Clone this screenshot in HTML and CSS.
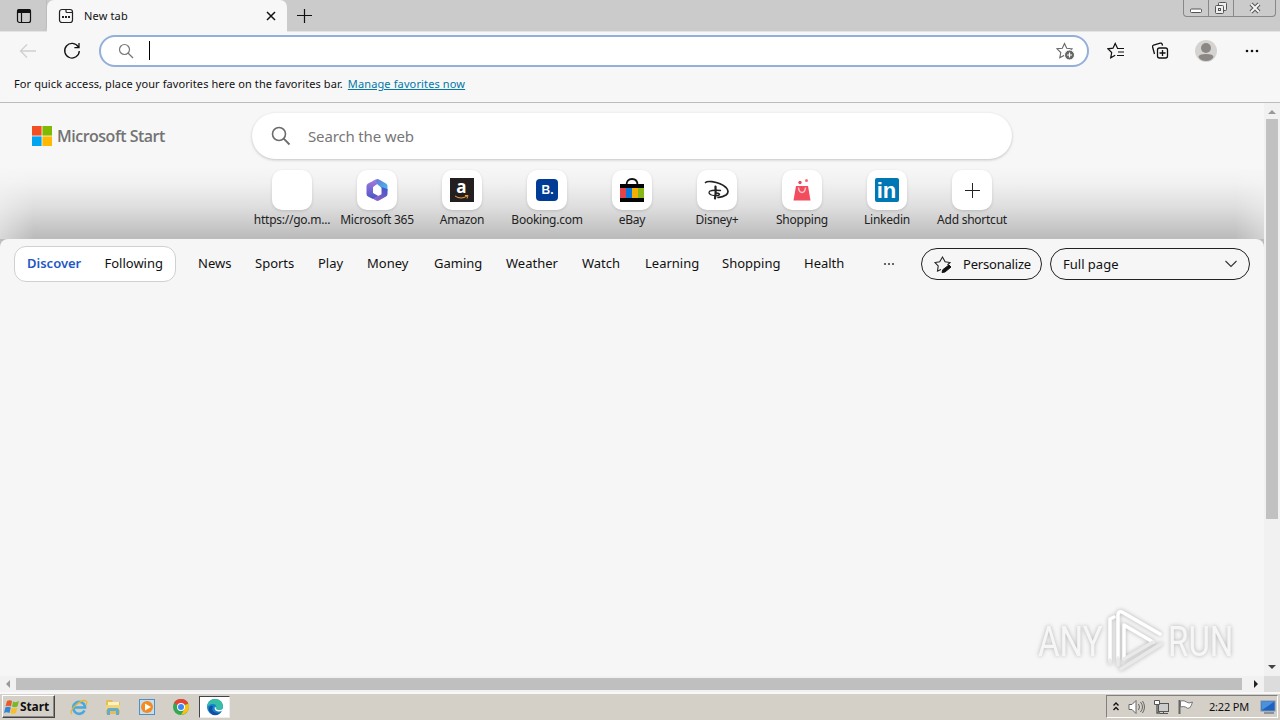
FILE: index.html
```html
<!DOCTYPE html>
<html lang="en">
<head>
    <meta charset="UTF-8">
    <title>New tab</title>
    <link rel="stylesheet" href="styles.css">
</head>
<body>
<header class="tabstrip">
    <div class="tab-actions">
        <svg width="16" height="16" viewBox="0 0 16 16"><rect x="1.5" y="1.5" width="13" height="13" rx="2" fill="none" stroke="#111" stroke-width="1.2"/><path d="M1 5V3q0-2 2-2h10q2 0 2 2v2z" fill="#111"/><path d="M5.500 5v9" stroke="#111" stroke-width="1.200"/></svg>
    </div>
    <div class="tab">
        <svg width="16" height="16" viewBox="0 0 16 16" fill="none" stroke="#222" stroke-width="1.200"><rect x="1.500" y="1.500" width="13" height="13" rx="2.500"/><path d="M8 1.500v2q0 1 1 1h5.500"/><path d="M4 9h2M7 9h2M10 9h2" stroke-width="1.800"/></svg>
        <span class="tab-title">New tab</span>
        <svg width="10" height="10" viewBox="0 0 10 10"><path d="M1 1l8 8M9 1L1 9" stroke="#111" stroke-width="1.500"/></svg>
    </div>
    <svg class="new-tab" width="16" height="16" viewBox="0 0 16 16"><path d="M7.500 1v14M0 7.500h15" stroke="#111" stroke-width="1.200"/></svg>
    <div class="win-buttons">
        <span class="win-min"><svg width="13" height="6" viewBox="0 0 13 6"><rect x=".5" y="1" width="11" height="3.500" rx="1" fill="#fff" stroke="#555"/></svg></span>
        <span class="win-max"><svg width="14" height="14" viewBox="0 0 14 14" fill="#eee" stroke="#555"><rect x="4.500" y="1.500" width="8" height="8" rx="1"/><rect x="1.500" y="4.500" width="8" height="8" rx="1"/><rect x="4.500" y="7.500" width="2" height="2"/></svg></span>
        <span class="win-close"><svg width="12" height="12" viewBox="0 0 12 12"><path d="M2 2l8 8M10 2l-8 8" stroke="#555" stroke-width="4"/><path d="M2 2l8 8M10 2l-8 8" stroke="#f4f4f4" stroke-width="2"/></svg></span>
    </div>
</header>

<div class="toolbar">
    <svg class="back" width="18" height="16" viewBox="0 0 18 16"><path d="M17 8H2M8 1.500L1.500 8L8 14.500" fill="none" stroke="#d0d0d0" stroke-width="1.300"/></svg>
    <svg class="reload" width="18" height="18" viewBox="0 0 18 18"><path d="M15.300 5A7.300 7.300 0 1 0 16.300 9M16 1v4.600h-4.600" fill="none" stroke="#111" stroke-width="1.300"/></svg>
    <div class="address">
        <svg width="16" height="16" viewBox="0 0 16 16"><circle cx="6.500" cy="6.500" r="5" fill="none" stroke="#777" stroke-width="1.200"/><path d="M10 10l5 5" stroke="#777" stroke-width="1.300"/></svg>
        <i class="caret"></i>
        <svg class="add-fav" width="19" height="18" viewBox="0 0 19 18"><path d="M8.500 1.500l2.200 4.700 5.300.600-3.800 3.700 1 5.300-4.700-2.600-4.700 2.600 1-5.300L1 6.800l5.300-.600z" fill="none" stroke="#666" stroke-width="1.100"/><circle cx="13.500" cy="13" r="5" fill="#666" stroke="#fff"/><path d="M11 13h5M13.500 10.500v5" stroke="#fff" stroke-width="1.200"/></svg>
    </div>
    <div class="tools">
        <svg width="18" height="18" viewBox="0 0 18 18" fill="none" stroke="#111" stroke-width="1.200"><path d="M10.500 6.300L8.200 1.500 6 6.200 1 6.800l3.700 3.700-1 5.300 4.500-2.600M10 6.500h7M11 10h6M10 13.500h7"/></svg>
        <svg width="18" height="18" viewBox="0 0 18 18" fill="none" stroke="#111" stroke-width="1.300"><path d="M3.500 12L1.600 5q-.400-1.500 1-2l6.600-1.800q1.500-.300 2 1l.300 1.500"/><rect x="6.500" y="6" width="10" height="10" rx="2" fill="#f7f7f7"/><path d="M11.500 8v6M8.500 11h6"/></svg>
        <svg width="22" height="22" viewBox="0 0 22 22"><circle cx="11" cy="11" r="11" fill="#d5d3d1"/><circle cx="11" cy="8" r="5" fill="#8b8784"/><path d="M3.500 17q0-3 7.500-3t7.500 3q-2 4-7.500 4t-7.500-4z" fill="#8b8784"/></svg>
        <svg width="14" height="4" viewBox="0 0 14 4" fill="#111"><circle cx="2" cy="2" r="1.300"/><circle cx="7" cy="2" r="1.300"/><circle cx="12" cy="2" r="1.300"/></svg>
    </div>
</div>

<div class="favbar">
    <span>For quick access, place your favorites here on the favorites bar.</span>
    <a href="#">Manage favorites now</a>
</div>

<div class="viewport">
    <main>
        <section class="top">
            <div class="search-row">
                <div class="logo">
                    <svg width="20" height="20" viewBox="0 0 20 20"><path d="M0 0h9.600v9.600H0z" fill="#f25022"/><path d="M10.400 0H20v9.600h-9.600z" fill="#7fba00"/><path d="M0 10.400h9.600V20H0z" fill="#00a4ef"/><path d="M10.400 10.400H20V20h-9.600z" fill="#ffb900"/></svg>
                    <span>Microsoft Start</span>
                </div>
                <div class="search">
                    <svg width="20" height="20" viewBox="0 0 20 20"><circle cx="8" cy="8" r="6.500" fill="none" stroke="#6b6b6b" stroke-width="1.600"/><path d="M12.700 12.700L18.500 18.500" stroke="#6b6b6b" stroke-width="1.800"/></svg>
                    <span>Search the web</span>
                </div>
            </div>
            <div class="shortcuts">
                <a class="shortcut"><span class="tile"></span><span class="label">https://go.m...</span></a>
                <a class="shortcut"><span class="tile">
                    <svg width="24" height="24" viewBox="0 0 24 24"><defs>
                        <linearGradient id="m1" x1="0" y1="0" x2="1" y2="1"><stop offset="0" stop-color="#6a6ad8"/><stop offset="1" stop-color="#45c4ee"/></linearGradient>
                        <linearGradient id="m2" x1="1" y1="0" x2="0" y2="1"><stop offset="0" stop-color="#3b55c5"/><stop offset="1" stop-color="#9a66c8"/></linearGradient>
                        <linearGradient id="m3" x1="0" y1="0" x2="0" y2="1"><stop offset="0" stop-color="#a57be0"/><stop offset="1" stop-color="#4a55c4"/></linearGradient>
                    </defs><path d="M8 3l3-1.600q1.500-.800 3 0l7 4q1.500 1 1.500 2.600v5.500L16.500 10 12 6 7 9z" fill="url(#m1)"/><path d="M22.500 11v5q0 1.700-1.500 2.600l-7 4q-1.500.800-3 0l-3-1.800 8.500-4.500V9z" fill="url(#m2)"/><path d="M11 1.400L3 5.500Q1.500 6.500 1.500 8v8q0 1.700 1.500 2.600l5 2.500 5.500-3.200L8 15V9l4-3z" fill="url(#m3)"/><circle cx="12" cy="12" r="3.900" fill="#fff"/></svg>
                </span><span class="label">Microsoft 365</span></a>
                <a class="shortcut"><span class="tile"><span class="amazon">a<svg width="14" height="5" viewBox="0 0 14 5"><path d="M0 1q6 4 12 0M10 .500h3l-1 3" fill="none" stroke="#f29b38"/></svg></span></span><span class="label">Amazon</span></a>
                <a class="shortcut"><span class="tile"><span class="booking">B.</span></span><span class="label">Booking.com</span></a>
                <a class="shortcut"><span class="tile">
                    <svg width="24" height="24" viewBox="0 0 24 24"><path d="M6.500 7q0-6 5.500-6t5.500 6" fill="none" stroke="#111" stroke-width="1.800"/><path d="M0 6h24v18H0z" fill="#050505"/><path d="M0 10h6v10H0z" fill="#e5434a"/><path d="M6 10h6v10H6z" fill="#0878df"/><path d="M12 10h6v10h-6z" fill="#f5af02"/><path d="M18 10h6v10h-6z" fill="#86b817"/></svg>
                </span><span class="label">eBay</span></a>
                <a class="shortcut"><span class="tile">
                    <svg width="26" height="24" viewBox="0 0 26 24" fill="none" stroke="#222" stroke-linecap="round"><path d="M1.500 4.500Q3 3 8 3.700 17 5 22 9.500q4 4 0 7.500-3.500 2.500-8 2.300" stroke-width="1.700"/><path d="M11.500 8.500q.500 7-.500 12" stroke-width="2.200"/><path d="M16.500 12.500q-8-.800-11 .8-1.500 2.200 2 3.700 3.500 1 6 .500 2.500-.500 2-1.500-1-1-4-1" stroke-width="1.300"/></svg>
                </span><span class="label">Disney+</span></a>
                <a class="shortcut"><span class="tile">
                    <svg width="20" height="24" viewBox="0 0 20 24"><path d="M4 8h12l2.500 14.500h-17z" fill="#f14d5e"/><path d="M6.500 9.500q.500 5 3.500 5t3.500-5" fill="none" stroke="#ffc5ca" stroke-width="1.500"/><circle cx="8" cy="4.500" r="1.700" fill="#e94b5c"/><circle cx="14.500" cy="2.500" r="1.500" fill="#f06b78"/></svg>
                </span><span class="label">Shopping</span></a>
                <a class="shortcut"><span class="tile"><span class="linkedin">in</span></span><span class="label">Linkedin</span></a>
                <a class="shortcut"><span class="tile">
                    <svg width="16" height="16" viewBox="0 0 16 16"><path d="M8.500 1v15M1 8.500h15" stroke="#222" stroke-width="1"/></svg>
                </span><span class="label">Add shortcut</span></a>
            </div>
        </section>

        <section class="feed">
            <div class="switch"><b>Discover</b><span>Following</span></div>
            <nav>
                <a>News</a>
                <a>Sports</a>
                <a>Play</a>
                <a>Money</a>
                <a>Gaming</a>
                <a>Weather</a>
                <a>Watch</a>
                <a>Learning</a>
                <a>Shopping</a>
                <a>Health</a>
            </nav>
            <svg class="more" width="12" height="4" viewBox="0 0 12 4" fill="#444"><circle cx="2" cy="2" r="1.100"/><circle cx="6" cy="2" r="1.100"/><circle cx="10" cy="2" r="1.100"/></svg>
            <div class="pill personalize">
                <svg width="20" height="20" viewBox="0 0 20 20"><path d="M8 15.500l-3.500 1.500.700-5L2 8.500l4.700-.800L9.500 3l2.600 4.700 4.900.800-2.500 2.500" fill="none" stroke="#222" stroke-width="1.100"/><path d="M16 11l2 2-6 5-3 .500.800-2.800z" fill="#111" stroke="#111"/></svg>
                <span>Personalize</span>
            </div>
            <div class="pill layout">
                <span>Full page</span>
                <svg width="14" height="8" viewBox="0 0 14 8"><path d="M1.500 1L7 6.500 12.500 1" fill="none" stroke="#333" stroke-width="1.100"/></svg>
            </div>
        </section>

        <div class="watermark">
            <span>ANY</span>
            <svg width="60" height="66" viewBox="0 0 60 66" fill="none" stroke="#fff" stroke-width="3.500" stroke-linejoin="round" stroke-linecap="round"><path d="M5 52V11l4-2M13 50V7q0-4 4-3l38 22"/><path d="M19 51V17l29 17"/><path d="M19 51l29-17M5 52v3M13 50v7M16 61l40-25" stroke="#e9e9e9"/></svg>
            <span>RUN</span>
        </div>
    </main>
    <div class="vscroll"><i class="up"></i><i class="thumb"></i><i class="down"></i></div>
    <div class="hscroll"><i class="prev"></i><i class="thumb"></i><i class="next"></i></div>
    <div class="corner"></div>
</div>

<footer class="taskbar">
    <div class="start">
        <svg width="16" height="16" viewBox="0 0 16 16"><path d="M3 2q3-1.500 5 0L7 7.500q-3-1.500-5.500 0z" fill="#e75b2a"/><path d="M9 2.500q3 1.500 6-.500l-1.500 5.500q-3 1.500-5.500 0z" fill="#79b82c"/><path d="M1.300 8.500q3-1.500 5.500 0L5.500 14q-3-1.500-5.500 0z" fill="#3784d5"/><path d="M7.700 8.800q3 1.500 5.500 0L12 14q-3 1.500-5.500 0z" fill="#f6c026"/></svg>
        <b>Start</b>
    </div>
    <div class="quick">
        <svg width="18" height="18" viewBox="0 0 18 18" fill="none"><path d="M14.500 12.500A6 6 0 1 1 15 8.500v1H4" stroke="#46a9df" stroke-width="2.700"/><path d="M2 16q-3-3 4-9t10-4q1.500 1 0 4" stroke="#e6b733" stroke-width="1.300"/></svg>
        <svg width="18" height="18" viewBox="0 0 18 18"><path d="M2 3l1-1h5l1 2h7v12H2z" fill="#e3bd55"/><path d="M4 4h11v5H4z" fill="#fff3bd"/><path d="M2 7h14v5H2z" fill="#f0d57c"/><path d="M3 17v-5q0-2 2-2h8q2 0 2 2v5h-3v-4H6v4z" fill="#62abd3"/></svg>
        <svg width="18" height="18" viewBox="0 0 18 18"><rect x="1.500" y="1.500" width="15" height="15" fill="#c5dff2" stroke="#4d90c8"/><circle cx="9" cy="9" r="6" fill="#f48a20"/><path d="M7 5.500l6 3.500-6 3.500z" fill="#fff"/></svg>
        <svg width="18" height="18" viewBox="0 0 18 18"><circle cx="9" cy="9" r="8" fill="#32a853"/><path d="M9 9L2 5q2-4 7-4t7 4v1H9z" fill="#e64235"/><path d="M9 9l7.500-3.500Q19 15 9 17l3.500-6z" fill="#fbc116"/><circle cx="9" cy="9" r="4" fill="#fff"/><circle cx="9" cy="9" r="3" fill="#4285f4"/></svg>
    </div>
    <div class="task-active">
        <svg width="18" height="18" viewBox="0 0 18 18"><circle cx="9" cy="9" r="8" fill="#1482cf"/><path d="M1.500 7Q3 1 9 1q7 0 8 7 0 4-5 4-3 0-2-2 1-4-3-4Q3 6 1.500 9z" fill="#36bfa5"/><path d="M7 8q-3 6 5 7 3 0 4-2-3 5-9 4-5-3-4-7 1-3 4-2z" fill="#124f9e"/><path d="M9 8.500Q7.500 12.500 12 13.500q3 .300 5-1.500v-1.500q-2 2-5 1.500-2.500-.500-2-2z" fill="#fff"/></svg>
    </div>
    <div class="tray">
        <svg width="8" height="12" viewBox="0 0 8 12"><path d="M1.500 4.500L4 2l2.500 2.500M1.500 9L4 6.500 6.500 9" fill="none" stroke="#111" stroke-width="1.400"/></svg>
        <svg class="volume" width="18" height="16" viewBox="0 0 18 16" fill="none" stroke="#666"><path d="M1 5.500h3l4-4v13l-4-4H1z" fill="#fff"/><path d="M10.500 5q2 3 0 6M12.500 3q4 5 0 10M14.500 2q4 6 0 12"/></svg>
        <svg class="network" width="17" height="16" viewBox="0 0 17 16" fill="#fff" stroke="#555"><rect x="5.500" y="4.500" width="10" height="8" fill="#ccc"/><path d="M7 14.500h8M10.500 12v2"/><path d="M1.500 1.500h5v4h-5z"/><path d="M4 6v8h3" fill="none" stroke-width="1.300"/></svg>
        <svg class="flag" width="17" height="16" viewBox="0 0 17 16"><path d="M2.500 1v14" stroke="#666" stroke-width="2"/><path d="M3.500 2q4-1 6 1t6 0q-1 4-3 6-2 1-4-1-2-1-5 0z" fill="#fff" stroke="#777"/></svg>
        <span class="clock">2:22 PM</span>
        <svg width="16" height="14" viewBox="0 0 16 14"><rect x="1" y="1" width="14" height="10" fill="#1f62bd" stroke="#7793b3"/><path d="M1.500 1.500h13L2 10z" fill="#4c91dc"/><path d="M4 13h10" stroke="#456"/></svg>
    </div>
</footer>
</body>
</html>
```
FILE: styles.css
```css
*{
    box-sizing: border-box;
    margin: 0;
    padding: 0;
}
body{
    width: 1280px;
    height: 720px;
    overflow: hidden;
    display: flex;
    flex-direction: column;
    font-family: "Noto Sans", "Open Sans", sans-serif;
    font-size: 11px;
    color: #111;
    background: #f7f7f7;
}
svg{
    display: block;
    flex: none;
}
span, b, a{white-space: nowrap;}

/* tabs */
.tabstrip{
    height: 32px;
    flex: none;
    display: flex;
    background: #cbcbcb;
    border-bottom: 1px solid #e4e4e4;
}
.tab-actions{
    width: 47px;
    padding: 8px 0 0 16px;
    border-right: 1px solid #bdbdbd;
    border-radius: 0 0 5px 0;
}
.tab{
    width: 240px;
    height: 32px;
    display: flex;
    align-items: center;
    padding: 0 11px;
    background: #f7f7f7;
    border-radius: 7px 7px 0 0;
}
.tab-title{
    flex: 1;
    margin: -2px 0 0 10px;
    letter-spacing: .15px;
}
.new-tab{margin: 8px 0 0 10px;}
.win-buttons{
    display: flex;
    width: 93px;
    height: 17px;
    margin: 0 4px 0 auto;
    border: 1px solid #888;
    border-top: 0;
    border-radius: 0 0 4px 4px;
}
.win-buttons span{
    display: flex;
    align-items: center;
    justify-content: center;
}
.win-min{
    width: 24px;
    padding-top: 5px;
}
.win-max{
    width: 26px;
    border: solid #888;
    border-width: 0 1px;
}
.win-close{width: 41px;}

/* address bar */
.toolbar{
    height: 38px;
    flex: none;
    display: flex;
    align-items: center;
}
.back{margin-left: 19px;}
.reload{margin: 0 27px 0 26px;}
.address{
    width: 990px;
    height: 32px;
    margin-left: -9px;
    display: flex;
    align-items: center;
    padding: 0 12px 0 17px;
    background: #fff;
    border: 2px solid #94afd9;
    border-radius: 16px;
}
.caret{
    width: 1px;
    height: 19px;
    margin: -1px 0 0 15px;
    background: #000;
}
.add-fav{margin-left: auto;}
.tools{
    display: flex;
    align-items: center;
    margin-left: 18px;
}
.tools svg:nth-child(2){margin-left: 26px;}
.tools svg:nth-child(3){margin-left: 26px;}
.tools svg:nth-child(4){margin-left: 28px;}

.favbar{
    height: 33px;
    flex: none;
    padding: 6px 0 0 14px;
    line-height: 16px;
    letter-spacing: .09px;
    border-bottom: 1px solid #bcbcbc;
}
.favbar a{
    margin-left: 2px;
    letter-spacing: .13px;
    color: #0078a8;
}

/* page */
.viewport{
    height: 589px;
    flex: none;
    display: grid;
    grid-template-columns: 1264px 16px;
    grid-template-rows: 573px 16px;
}
main{
    position: relative;
    overflow: hidden;
    background: #bdbdbd;
}
.top{
    height: 136px;
    padding-top: 10px;
    background: linear-gradient(to right, rgba(246,246,246,.5), rgba(246,246,246,0) 34px, rgba(246,246,246,0) 1235px, rgba(246,246,246,.4)),
                linear-gradient(#f7f7f7 64px, #f1f1f1 80px, #dedede 104px, #bcbcbc 134px);
}
.search-row{display: flex;}
.logo{
    width: 252px;
    height: 46px;
    display: flex;
    align-items: center;
    padding-left: 32px;
    font: 600 16px "Open Sans", sans-serif;
    letter-spacing: -.5px;
    color: #737373;
}
.logo span{margin-left: 5px;}
.search{
    width: 760px;
    height: 46px;
    display: flex;
    align-items: center;
    padding-left: 19px;
    border-radius: 23px;
    background: #fff;
    box-shadow: 0 1px 3px rgba(0,0,0,.22);
    font-size: 15px;
    letter-spacing: -.15px;
    color: #777;
}
.search span{margin-left: 17px;}
.shortcuts{
    display: flex;
    padding: 11px 0 0 249px;
}
.shortcut{
    width: 85px;
    display: flex;
    flex-direction: column;
    align-items: center;
    font-size: 12px;
}
.tile{
    width: 40px;
    height: 40px;
    display: flex;
    align-items: center;
    justify-content: center;
    border-radius: 10px;
    background: #fff;
    box-shadow: 0 1px 3px rgba(0,0,0,.14);
}
.label{
    line-height: 18px;
    margin: 1px -1px 0 0;
    letter-spacing: -.25px;
    color: #222;
}
.amazon{
    width: 24px;
    height: 24px;
    display: flex;
    flex-direction: column;
    align-items: center;
    background: #231f20;
    color: #fff;
    font: bold 17px/17px "Open Sans", sans-serif;
}
.booking{
    width: 22px;
    height: 22px;
    padding-left: 2px;
    border-radius: 4px;
    background: #003b95;
    color: #fff;
    font: bold 12px/22px "Liberation Sans", sans-serif;
    text-align: center;
}
.linkedin{
    width: 24px;
    height: 24px;
    border-radius: 2px;
    background: #0077b5;
    color: #fff;
    font: bold 22px/25px "Liberation Sans", sans-serif;
    text-align: center;
}

/* feed navigation */
.feed{
    height: 437px;
    display: flex;
    align-items: flex-start;
    padding: 7px 14px 0;
    border-radius: 8px 8px 0 0;
    background: #f6f6f6;
    font-size: 13px;
}
.switch{
    width: 162px;
    height: 36px;
    display: flex;
    flex: none;
    justify-content: space-between;
    padding: 0 12px;
    line-height: 33px;
    border: 1px solid #d0d0d0;
    border-radius: 12px;
    background: #fff;
}
.switch b{
    color: #2457c5;
    font-weight: 600;
}
nav{
    display: grid;
    grid-template-columns: 57px 63px 49px 67px 72px 76px 63px 77px 82px 40px;
    margin-left: 22px;
    line-height: 35px;
}
.more{margin: 16px 26px 0 39px;}
.pill{
    height: 32px;
    margin-top: 2px;
    display: flex;
    flex: none;
    align-items: center;
    border: 1px solid #222;
    border-radius: 16px;
}
.personalize{
    width: 121px;
    padding-left: 11px;
}
.personalize span{
    margin-left: 10px;
    letter-spacing: -.2px;
}
.layout{
    width: 200px;
    margin-left: 8px;
    padding: 0 11px 0 12px;
    justify-content: space-between;
}

.watermark{
    position: absolute;
    left: 1038px;
    top: 505px;
    display: flex;
    align-items: center;
    gap: 3px;
    width: 196px;
    height: 66px;
    filter: drop-shadow(0 0 2px rgba(0,0,0,.28));
    color: #f6f6f6;
    font: 43px "Roboto", sans-serif;
}
.watermark span{
    width: 64px;
    flex: none;
    transform: scaleX(.77);
    transform-origin: left;
}

/* scrollbars */
.vscroll, .hscroll{
    display: flex;
    align-items: center;
    background: #f1f1f1;
}
.vscroll{
    flex-direction: column;
    padding-top: 7px;
}
.hscroll{padding-left: 6px;}
.corner{background: #dcdcdc;}
.vscroll .thumb{
    width: 12px;
    height: 400px;
    margin-top: 5px;
    background: #c1c1c1;
}
.hscroll .thumb{
    width: 1226px;
    height: 12px;
    margin-left: 6px;
    background: #bfbfbf;
}
.up, .down{
    border: 4px solid transparent;
    border-top: 0;
    border-bottom: 4px solid #999;
}
.down{
    margin: auto 0 7px;
    border-top: 4px solid #444;
    border-bottom: 0;
}
.prev, .next{
    border: 4px solid transparent;
    border-left: 0;
    border-right: 4px solid #999;
}
.next{
    margin-left: 12px;
    border-right: 0;
    border-left: 4px solid #222;
}

/* taskbar */
.taskbar{
    height: 28px;
    flex: none;
    display: flex;
    padding: 3px 2px 0;
    background: #d4d0c8;
    box-shadow: inset 0 2px #f8f8f8;
}
.start{
    width: 53px;
    height: 23px;
    display: flex;
    align-items: center;
    padding-left: 1px;
    border: 1px solid;
    border-color: #fff #444 #444 #fff;
    box-shadow: inset -1px -1px #888;
    font-size: 12px;
    letter-spacing: -.1px;
}
.quick{
    display: flex;
    gap: 16px;
    padding: 3px 0 0 15px;
}
.task-active{
    width: 31px;
    height: 22px;
    margin: 1px 0 0 9px;
    padding: 1px 0 0 6px;
    border: 1px solid;
    border-color: #444 #eee #eee #444;
    background: #fff;
}
.tray{
    width: 172px;
    height: 23px;
    display: flex;
    align-items: center;
    margin-left: auto;
    padding-left: 5px;
    border: 1px solid;
    border-color: #808080 #fff #fff #808080;
}
.volume{margin-left: 8px;}
.network{margin-left: 7px;}
.flag{margin-left: 7px;}
.clock{
    width: 39px;
    margin: 0 12px 0 15px;
    letter-spacing: -.2px;
}
```
